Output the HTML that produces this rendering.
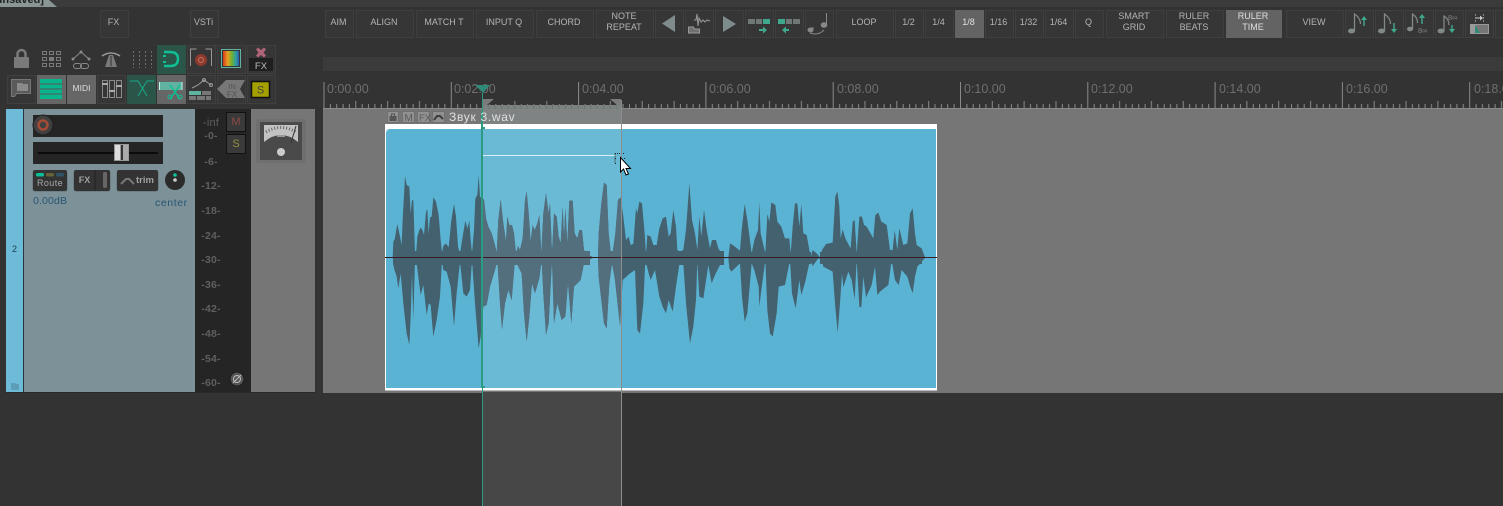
<!DOCTYPE html>
<html><head><meta charset="utf-8"><style>
html,body{margin:0;padding:0;background:#333}
#r{position:relative;width:1503px;height:506px;overflow:hidden;background:#333;font-family:"Liberation Sans","DejaVu Sans",sans-serif}
.b{position:absolute;top:10px;height:26px;border:1px solid #3f3f3f;background:#363636;color:#b4b4b4;font-size:9px;line-height:11px;display:flex;align-items:center;justify-content:center;text-align:center;box-sizing:content-box}
.b span{position:relative;top:-2px;left:-1px}
.on{background:#636363;border-color:#636363;color:#e0e0e0}
.c{position:absolute;width:27px;height:27px;border:1px solid #3f3f3f;background:#363636}
.m{position:absolute;width:40px;text-align:center;color:#5f5f5f;font-size:10.5px;line-height:12px;font-weight:bold;letter-spacing:.2px}
svg{position:absolute;left:0;top:0}
</style></head><body><div id="r">
<div style="position:absolute;left:0;top:0;width:1503px;height:7px;background:#3b3b3b"></div>
<div style="position:absolute;left:0;top:0;width:57px;height:7px;background:#8a9696;clip-path:polygon(0 0,49px 0,57px 100%,0 100%)"></div>
<div style="position:absolute;left:-8px;top:-6px;color:#222;font-size:11px;line-height:12px;font-weight:bold">[unsaved]</div>
<div style="position:absolute;left:323px;top:57px;width:1180px;height:14px;background:#3b3b3b"></div>

<div class="b" style="left:100px;width:27px"><span>FX</span></div>
<div class="b" style="left:190px;width:27px"><span>VSTi</span></div>
<div class="b" style="left:325px;width:27px"><span>AIM</span></div>
<div class="b" style="left:356px;width:56px"><span>ALIGN</span></div>
<div class="b" style="left:416px;width:56px"><span>MATCH T</span></div>
<div class="b" style="left:476px;width:56px"><span>INPUT Q</span></div>
<div class="b" style="left:536px;width:56px"><span>CHORD</span></div>
<div class="b" style="left:596px;width:56px"><span>NOTE<br>REPEAT</span></div>
<div class="b" style="left:655px;width:27px"></div>
<div class="b" style="left:685px;width:27px"></div>
<div class="b" style="left:715px;width:27px"></div>
<div class="b" style="left:745px;width:27px"></div>
<div class="b" style="left:775px;width:27px"></div>
<div class="b" style="left:805px;width:27px"></div>
<div class="b" style="left:836px;width:56px"><span>LOOP</span></div>
<div class="b" style="left:895px;width:27px"><span>1/2</span></div>
<div class="b" style="left:925px;width:27px"><span>1/4</span></div>
<div class="b on" style="left:955px;width:27px"><span>1/8</span></div>
<div class="b" style="left:985px;width:27px"><span>1/16</span></div>
<div class="b" style="left:1015px;width:27px"><span>1/32</span></div>
<div class="b" style="left:1045px;width:27px"><span>1/64</span></div>
<div class="b" style="left:1075px;width:27px"><span>Q</span></div>
<div class="b" style="left:1106px;width:56px"><span>SMART<br>GRID</span></div>
<div class="b" style="left:1166px;width:56px"><span>RULER<br>BEATS</span></div>
<div class="b on" style="left:1226px;width:54px"><span>RULER<br>TIME</span></div>
<div class="b" style="left:1286px;width:56px"><span>VIEW</span></div>
<div class="b" style="left:1345px;width:27px"></div>
<div class="b" style="left:1375px;width:27px"></div>
<div class="b" style="left:1405px;width:27px"></div>
<div class="b" style="left:1435px;width:27px"></div>
<div class="b" style="left:1465px;width:27px"></div>
<div class="b" style="left:1495px;width:27px"></div>

<div class="c" style="left:157px;top:45px;background:#2b5549;border-color:#2b5549"></div>
<div class="c" style="left:187px;top:45px"></div>
<div class="c" style="left:217px;top:45px"></div>
<div class="c" style="left:247px;top:45px"></div>
<div class="c" style="left:7px;top:75px"></div>
<div class="c" style="left:37px;top:75px;background:#666;border-color:#666"></div>
<div class="c" style="left:67px;top:75px;background:#666;border-color:#666;color:#ddd;font-size:8.5px;line-height:24px;text-align:center">MIDI</div>
<div class="c" style="left:97px;top:75px"></div>
<div class="c" style="left:127px;top:75px;background:#2b5549;border-color:#2b5549"></div>
<div class="c" style="left:157px;top:75px;background:#666;border-color:#666"></div>
<div class="c" style="left:187px;top:75px"></div>
<div class="c" style="left:217px;top:75px"></div>
<div class="c" style="left:247px;top:75px"></div>

<!-- track panel -->
<div style="position:absolute;left:6px;top:109px;width:17px;height:283px;background:#6dbbd9"></div>
<div style="position:absolute;left:23px;top:109px;width:1px;height:283px;background:#26363c"></div>
<div style="position:absolute;left:24px;top:109px;width:171px;height:283px;background:#7d9298"></div>
<div style="position:absolute;left:195px;top:109px;width:56px;height:283px;background:#252525"></div>
<div style="position:absolute;left:251px;top:109px;width:64px;height:283px;background:#767676"></div>
<div style="position:absolute;left:6px;top:392px;width:309px;height:1px;background:#2a2a2a"></div>
<div style="position:absolute;left:12px;top:244px;color:#1d3a4a;font-size:9px;line-height:11px">2</div>
<div style="position:absolute;left:33px;top:115px;width:130px;height:22px;background:#252525"></div>
<div style="position:absolute;left:33px;top:142px;width:130px;height:22px;background:#252525"></div>
<div style="position:absolute;left:33px;top:195px;color:#265574;font-size:10.5px;line-height:12px;letter-spacing:.15px">0.00dB</div>
<div style="position:absolute;left:155px;top:197px;color:#265574;font-size:10.5px;line-height:12px;letter-spacing:.6px">center</div>
<div style="position:absolute;left:33px;top:170px;width:34px;height:20px;background:#333;border-radius:2px;box-shadow:0 1px 1px #222"></div>
<div style="position:absolute;left:33px;top:178px;width:34px;text-align:center;color:#a8a8a8;font-size:9px;line-height:11px;letter-spacing:.4px">Route</div>
<div style="position:absolute;left:74px;top:170px;width:36px;height:20px;background:#333;border-radius:2px;box-shadow:0 1px 1px #222"></div>
<div style="position:absolute;left:74px;top:174px;width:21px;text-align:center;color:#a0a0a0;font-size:9px;line-height:12px;font-weight:bold">FX</div>
<div style="position:absolute;left:117px;top:170px;width:41px;height:20px;background:#333;border-radius:2px;box-shadow:0 1px 1px #222"></div>
<div style="position:absolute;left:136px;top:175px;color:#a0a0a0;font-size:9.5px;line-height:12px;font-weight:bold">trim</div>
<div class="m" style="left:191px;top:117px;font-weight:normal;font-size:11px">-inf</div>
<div class="m" style="top:130px;left:191px">-0-</div><div class="m" style="top:156px;left:191px">-6-</div><div class="m" style="top:180px;left:191px">-12-</div><div class="m" style="top:205px;left:191px">-18-</div><div class="m" style="top:230px;left:191px">-24-</div><div class="m" style="top:254px;left:191px">-30-</div><div class="m" style="top:279px;left:191px">-36-</div><div class="m" style="top:303px;left:191px">-42-</div><div class="m" style="top:328px;left:191px">-48-</div><div class="m" style="top:353px;left:191px">-54-</div><div class="m" style="top:377px;left:191px">-60-</div>
<div style="position:absolute;left:226px;top:112px;width:18px;height:18px;background:#3a3a3a;border:1px solid #111;color:#8e4a44;font-size:11px;line-height:18px;text-align:center">M</div>
<div style="position:absolute;left:226px;top:134px;width:18px;height:18px;background:#3a3a3a;border:1px solid #111;color:#94903a;font-size:11px;line-height:18px;text-align:center">S</div>

<!-- arrange -->
<div style="position:absolute;left:323px;top:109px;width:1180px;height:284px;background:#767676"></div>
<div style="position:absolute;left:482px;top:392px;width:139px;height:114px;background:#474747"></div>
<div style="position:absolute;left:482px;top:109px;width:139px;height:15px;background:#7f8383"></div>

<svg width="1503" height="506" viewBox="0 0 1503 506">
<defs><pattern id="t" patternUnits="userSpaceOnUse" x="323.5" y="80" width="127.3" height="29">
<path d="M.5 2V28M6.9 24V28M13.2 24V28M19.6 24V28M25.9 24V28M32.3 21V28M38.7 24V28M45 24V28M51.4 24V28M57.8 24V28M64.1 21V28M70.5 24V28M76.9 24V28M83.2 24V28M89.6 24V28M96 21V28M102.300 24V28M108.700 24V28M115 24V28M121.400 24V28" stroke="#8a8a8a" fill="none"/></pattern>
<pattern id="cells" patternUnits="userSpaceOnUse" x="482" y="105" width="6.37" height="4"><rect width="6.370" height="4" fill="#7b8381"/><rect width="1" height="4" fill="#6c7472"/></pattern>
<linearGradient id="g"><stop offset="0" stop-color="#d23a1f"/><stop offset=".3" stop-color="#e8a020"/><stop offset=".55" stop-color="#6fb030"/><stop offset=".8" stop-color="#2fa0a0"/><stop offset="1" stop-color="#2a5fb0"/></linearGradient></defs>
<rect x="323" y="80" width="1180" height="29" fill="url(#t)"/>
<rect x="323" y="108" width="1180" height="1" fill="#8a8a8a"/>
<g font-family="Liberation Sans,sans-serif" font-size="12.500" fill="#6f6f6f">
<text x="327" y="93">0:00.00</text><text x="454" y="93">0:02.00</text><text x="582" y="93">0:04.00</text><text x="709" y="93">0:06.00</text><text x="837" y="93">0:08.00</text><text x="964" y="93">0:10.00</text><text x="1091" y="93">0:12.00</text><text x="1219" y="93">0:14.00</text><text x="1346" y="93">0:16.00</text><text x="1474" y="93">0:18.00</text></g>
<rect x="482" y="105" width="139" height="4" fill="url(#cells)"/>
<path d="M483 99h11l-7 6h-4zM621 99h-11l7 6h4z" fill="#7b7b7b"/>
<path d="M475 85h15l-7 8z" fill="#2f8a78"/>

<!-- clip -->
<rect x="385" y="124" width="552" height="266.500" fill="#fff"/>
<rect x="386" y="129" width="550" height="259" fill="#5ab3d2"/>
<rect x="482" y="129" width="139" height="259" fill="#6bbad5"/>
<g fill="#44616f">
<polygon transform="translate(380 170) scale(.33333)" points="38,262 40,215 44,208 52,162 60,200 65,225 68,150 75,18 80,45 88,50 92,130 96,90 100,92 105,250 108,255 112,200 118,180 122,172 128,182 132,195 138,125 142,118 146,190 150,142 155,140 160,82 168,95 176,135 182,210 186,250 190,228 198,220 206,232 214,150 222,102 228,140 234,230 240,252 248,200 256,152 262,175 268,152 272,210 276,250 282,180 286,85 292,75 296,15 300,80 305,85 312,88 318,145 325,170 335,190 345,225 350,250 355,150 362,88 370,160 378,215 382,140 388,165 396,165 402,190 408,250 414,228 420,240 428,205 435,90 440,65 446,130 452,215 458,165 464,180 472,160 478,135 484,250 490,130 498,70 506,130 510,100 516,250 522,130 530,140 536,200 542,220 548,110 552,200 556,115 562,220 568,92 578,92 584,190 592,205 598,180 606,180 612,240 620,250 632,258 640,262 654,262 656,190 664,100 672,38 680,45 686,190 692,245 698,248 706,190 714,90 722,82 730,140 738,210 746,200 752,225 760,222 768,115 772,130 778,95 786,100 794,190 798,255 802,195 812,200 820,225 830,225 838,175 848,145 858,140 866,200 872,190 880,120 888,170 892,240 900,245 900,270 888,350 878,425 866,390 858,430 848,410 838,380 825,300 812,330 806,310 796,270 790,400 780,490 772,480 765,300 750,310 728,330 720,468 705,330 696,280 688,340 680,475 672,460 656,320 654,262 640,262 635,265 612,280 602,330 592,340 582,350 574,460 564,340 556,440 545,450 532,400 522,460 516,270 506,460 498,495 490,370 485,270 478,325 465,370 456,340 448,440 440,515 432,430 425,310 415,290 405,270 395,390 385,360 375,400 366,478 360,400 352,270 345,300 330,350 320,405 310,410 302,500 296,535 285,400 276,270 270,360 260,380 250,370 240,275 230,370 222,468 212,350 200,305 190,300 186,270 180,380 170,450 160,500 152,405 146,400 140,435 130,345 122,375 116,330 110,280 105,270 100,450 96,310 92,440 88,525 80,490 70,400 62,310 55,355 50,320 42,295"/>
<polygon transform="translate(660 170) scale(.33333)" points="60,245 70,240 78,180 88,40 96,150 105,190 112,240 118,140 124,200 132,120 140,180 150,235 156,210 168,210 175,235 185,250 192,262 205,264 210,220 218,225 240,242 245,180 254,102 262,150 275,250 283,210 294,180 298,98 302,190 316,250 322,132 328,155 334,97 346,105 352,155 364,170 375,205 388,205 392,250 398,170 405,100 412,100 418,170 424,102 430,190 440,195 448,240 452,262 458,240 470,250 480,262 486,240 498,222 518,218 526,80 532,64 538,110 542,205 548,178 556,205 572,235 578,155 584,150 590,250 598,140 606,140 612,165 620,170 640,205 646,135 655,128 664,155 680,165 690,240 698,240 704,180 712,240 718,175 730,225 742,220 750,130 758,115 765,190 770,225 785,235 795,262 795,264 772,290 765,320 758,370 750,348 742,320 725,300 716,345 705,330 695,270 685,345 660,365 652,375 645,290 635,345 618,382 610,320 604,412 598,410 590,270 584,388 575,330 565,305 550,352 546,310 540,400 533,488 525,400 518,305 490,290 485,270 475,265 458,288 450,270 436,335 424,375 418,330 407,415 396,370 390,270 375,345 356,350 350,430 338,500 330,490 322,420 316,270 304,360 298,410 296,350 283,300 275,280 262,430 254,455 246,380 240,280 214,305 208,295 205,264 190,265 165,315 155,340 145,285 130,385 118,380 112,275 108,390 100,470 90,520 78,400 70,280 60,280"/>
<rect x="393" y="251" width="89" height="14"/><rect x="622" y="251" width="102" height="14"/><rect x="731" y="252" width="80" height="12"/><rect x="820" y="252" width="102" height="12"/>
</g>
<polygon transform="translate(380 170) scale(.33333)" fill="#536f7e" points="306,85 312,88 318,145 325,170 335,190 345,225 350,250 355,150 362,88 370,160 378,215 382,140 388,165 396,165 402,190 408,250 414,228 420,240 428,205 435,90 440,65 446,130 452,215 458,165 464,180 472,160 478,135 484,250 490,130 498,70 506,130 510,100 516,250 522,130 530,140 536,200 542,220 548,110 552,200 556,115 562,220 568,92 578,92 584,190 592,205 598,180 606,180 612,240 620,250 632,258 640,262 654,262 656,190 664,100 672,38 680,45 686,190 692,245 698,248 706,190 714,90 722,82 724,140 724,400 720,468 705,330 696,280 688,340 680,475 672,460 656,320 654,262 640,262 635,265 612,280 602,330 592,340 582,350 574,460 564,340 556,440 545,450 532,400 522,460 516,270 506,460 498,495 490,370 485,270 478,325 465,370 456,340 448,440 440,515 432,430 425,310 415,290 405,270 395,390 385,360 375,400 366,478 360,400 352,270 345,300 330,350 320,405 310,410 306,450"/>
<rect x="483" y="251" width="107" height="14" fill="#536f7e"/><rect x="599" y="251" width="22" height="14" fill="#536f7e"/>
<rect x="385" y="257" width="552" height="1" fill="#3a1a1f"/>
<path d="M386 129h3l-3 3z" fill="#cfe7f0"/>
<path d="M482 155.500H615" stroke="#d8eef5"/>
<path d="M615 153.500h10M615 158.500h1M624 158.500h1M615 163.500h1M615 153.500v10" stroke="#222" stroke-dasharray="1 1" fill="none"/>
<rect x="621" y="100" width="1" height="406" fill="#8c8c8c"/>
<rect x="481" y="111" width="2" height="277" fill="#2a9a80"/>
<rect x="482" y="93" width="1" height="413" fill="#2a9a80"/>
<rect x="481" y="127" width="4" height="2" fill="#2a9a80"/>
<rect x="481" y="386" width="4" height="2" fill="#2a9a80"/>
<path d="M620.500 157.500V172l3-3 2.500 6 2.500-1-2.500-5.500h4.500z" fill="#fff" stroke="#000"/>
<g stroke="#6f6f6f" fill="#909090"><rect x="387.500" y="111.500" width="11" height="11"/><rect x="402.500" y="111.500" width="12" height="11"/><rect x="417.500" y="111.500" width="12" height="11"/><rect x="432.500" y="111.500" width="12" height="11"/></g>
<path d="M389.500 116h7v5h-7z" fill="#555"/><path d="M391.500 116v-2h3v2" stroke="#555" fill="none"/>
<path d="M434 120l3-4h3l3 3" stroke="#3d3d3d" stroke-width="2" fill="none"/>
<text x="404.500" y="121" font-family="Liberation Sans,sans-serif" font-size="10" fill="#5a5a5a">M</text>
<text x="419" y="121" font-family="Liberation Sans,sans-serif" font-size="9.500" fill="#5a5a5a">FX</text>
<text x="449" y="121" font-family="Liberation Sans,sans-serif,DejaVu Sans" font-size="12" letter-spacing=".7" fill="#e0e0e0">Звук 3.wav</text>

<!-- top toolbar icons -->
<path d="M675 15v17l-13-8.500z" fill="#808c8c"/><path d="M723 16v16l13-8z" fill="#808c8c"/>
<path d="M688.500 33v-6h5l1 2h5v4z" fill="#6f6f6f" stroke="#999"/><path d="M694 20h2l1-6 1 12 1-8 2 4 2-2 2 2 2-2 3 1" stroke="#999" fill="none"/>
<path d="M748 19h7v5h-7zM756 19h6v5h-6z" fill="#6f7777"/><rect x="763" y="19" width="7" height="5" fill="#3fa98d"/><path d="M759 29h4v-2.500l4 3.500-4 3.500V31h-4z" fill="#3fa98d"/>
<rect x="778" y="19" width="7" height="5" fill="#3fa98d"/><path d="M786 19h6v5h-6zM793 19h7v5h-7z" fill="#6f7777"/><path d="M789 29h-3v-2.500l-4 3.500 4 3.500V31h3z" fill="#3fa98d"/>
<g fill="#888"><ellipse cx="810.500" cy="30" rx="3" ry="2.500"/><ellipse cx="824" cy="25" rx="3.300" ry="2.800"/></g><path d="M813 30v-3M826.500 25V13M810 33q8 3 14-3" stroke="#888" fill="none"/>
<g fill="#808888"><ellipse cx="1351.500" cy="31" rx="3.500" ry="2.500"/><ellipse cx="1381.500" cy="31" rx="3.500" ry="2.500"/><ellipse cx="1410" cy="29" rx="3" ry="2.300"/><ellipse cx="1441" cy="31" rx="3.500" ry="2.500"/></g>
<path d="M1354.500 31V14q6 4 6 10M1384.500 31V14q6 4 6 10M1412.500 29V14q5 3 5 9M1444 31V16q5 3 5 9" stroke="#808888" stroke-width="1.300" fill="none"/>
<path d="M1363.300 26v-6h-2.300l3 -4 3 4h-2.300v6zM1393.300 23v6h-2.300l3 4 3-4h-2.300v-6zM1421.300 24v-6h-2.300l3-4 3 4h-2.300v6zM1451.300 25v4h-2.300l3 4 3-4h-2.300v-4z" fill="#3fa98d"/>
<text x="1418" y="33" font-family="Liberation Sans,sans-serif" font-size="7.500" fill="#808080">8∞</text>
<text x="1448" y="20" font-family="Liberation Sans,sans-serif" font-size="7.500" fill="#808080">8∞</text>
<path d="M1475.500 14v8M1483.500 14v8" stroke="#888" stroke-dasharray="2 1"/><path d="M1476 17.500h4v-2l3 2.500-3 2.500v-2h-4z" fill="#ccc"/>
<rect x="1470.500" y="24.500" width="18" height="9" fill="#777" stroke="#999"/><path d="M1471 25h5v8h-5z" fill="#9a9a9a"/><path d="M1475 25l5 8h-5z" fill="#2f8a78"/>

<!-- row 1 icons -->
<path d="M15 58h13v9H15z" fill="#7a7a7a" stroke="#7a7a7a" stroke-width="2" stroke-linejoin="round"/><path d="M17.500 57v-3a4 4 0 018 0v3" stroke="#7a7a7a" stroke-width="2.500" fill="none"/>
<g fill="none" stroke="#7a7a7a"><path d="M42.500 51.500h4v3h-4zM49.500 51.500h4v3h-4zM56.500 51.500h4v3h-4zM42.500 57.500h4v3h-4zM56.500 57.500h4v3h-4zM42.500 63.500h4v3h-4zM49.500 63.500h4v3h-4zM56.500 63.500h4v3h-4z"/></g><rect x="49" y="57" width="5" height="4" fill="#7a7a7a"/>
<path d="M73 59l8-7 8 7" fill="none" stroke="#8a8a8a"/><g fill="#8a8a8a"><circle cx="81" cy="52" r="1.500"/><circle cx="73" cy="59" r="1.500"/><circle cx="89" cy="59" r="1.500"/></g><rect x="73.500" y="63.500" width="8" height="5" rx="2.500" fill="none" stroke="#8a8a8a"/><rect x="80.500" y="63.500" width="8" height="5" rx="2.500" fill="none" stroke="#8a8a8a"/>
<path d="M102 56q9-6 18 0" stroke="#999" stroke-width="1.500" fill="none"/><path d="M105 67l4-12h4l4 12z" fill="#7a7a7a"/><path d="M111 56v10" stroke="#333"/>
<path d="M133.500 51v17M139.500 51v17M145.500 51v17M151.500 51v17" stroke="#6f6f6f" stroke-dasharray="2 2" fill="none"/>
<path d="M164 52h6q8 0 8 7t-8 7h-6" stroke="#0fbf95" stroke-width="2.500" fill="none"/><rect x="163" y="55" width="3" height="2" fill="#0fbf95"/><rect x="163" y="61" width="3" height="2" fill="#0fbf95"/>
<circle cx="201" cy="60" r="6" fill="#8c3a2f"/><circle cx="201" cy="60" r="2.500" fill="none" stroke="#c9715c"/><path d="M190.500 66V49h6M211.500 66V49h-6" stroke="#999" fill="none"/>
<rect x="221.500" y="49.500" width="19" height="18" fill="none" stroke="#5fb3a0"/>
<rect x="223" y="51" width="16" height="15" fill="url(#g)"/>
<path d="M258 47.500l3 2.500 3-2.500 2 2-2.500 3 2.500 3-2 2-3-2.500-3 2.500-2-2 2.500-3-2.500-3z" fill="#b06478"/>
<rect x="249" y="58" width="24" height="13" fill="#1f1f1f"/><text x="261" y="69" text-anchor="middle" font-family="Liberation Sans,sans-serif" font-size="9.500" fill="#bbb">FX</text>

<!-- row 2 icons -->
<path d="M11.500 79.500h19v14h-14l-2 3h-3z" fill="#5a5a5a" stroke="#777"/><path d="M17 91v-8h5l1 1h5v7z" fill="#8a8a8a"/>
<rect x="40" y="79" width="22" height="20" fill="#0ab58e"/><path d="M40 84h22M40 89h22M40 94h22" stroke="#555"/>
<g fill="none" stroke="#8a8a8a"><rect x="102.500" y="80.500" width="5" height="17"/><rect x="109.500" y="80.500" width="5" height="17"/><rect x="116.500" y="80.500" width="5" height="17"/></g><path d="M102 84h6M109 91h6M116 86h6" stroke="#aaa" stroke-width="2"/>
<path d="M130 81h8l9 15M154 81h-7l-9 15" stroke="#18a888" fill="none"/>
<rect x="160" y="82" width="22" height="8" fill="#5fb3a0"/><path d="M159.500 82v8M182 82v8" stroke="#bfe" /><path d="M170 99l10-14M180 99l-10-14" stroke="#0fbf95" stroke-width="1.500"/><circle cx="170" cy="97" r="2" fill="none" stroke="#0fbf95"/><circle cx="180" cy="97" r="2" fill="none" stroke="#0fbf95"/>
<path d="M192 88l6-3 6-5 7 5" fill="none" stroke="#999"/><circle cx="204" cy="80" r="1.500" fill="none" stroke="#999"/><circle cx="211" cy="85" r="1.500" fill="none" stroke="#999"/>
<rect x="189" y="91" width="12" height="4" fill="#5fb3a0"/><rect x="202" y="91" width="9" height="4" fill="#777"/><rect x="189" y="96" width="7" height="4" fill="#777"/><rect x="197" y="96" width="8" height="4" fill="#777"/><rect x="206" y="96" width="5" height="4" fill="#777"/>
<path d="M245 80h-19l-9 9 9 9h19l-5-9z" fill="#777"/>
<text x="232" y="89" text-anchor="middle" font-family="Liberation Sans,sans-serif" font-size="7.500" fill="#555">IN</text><text x="232" y="97" text-anchor="middle" font-family="Liberation Sans,sans-serif" font-size="8" fill="#555">FX</text>
<rect x="251.500" y="81.500" width="18" height="16" fill="#a3a000" stroke="#111" stroke-width="1.500"/><text x="260.500" y="93.500" text-anchor="middle" font-family="Liberation Sans,sans-serif" font-size="11" fill="#444">S</text>

<!-- track icons -->
<circle cx="43" cy="125" r="10.500" fill="#1e1e1e"/><circle cx="43" cy="125" r="9.500" fill="#404040"/><circle cx="43" cy="125" r="4.500" fill="none" stroke="#a24b35" stroke-width="2.500"/>
<rect x="38" y="152" width="120" height="2" fill="#0b0b0b"/>
<rect x="114" y="144" width="15" height="17" fill="#999"/><rect x="115" y="145" width="5" height="15" fill="#ddd"/><rect x="121" y="145" width="2" height="15" fill="#333"/><rect x="123" y="145" width="5" height="15" fill="#aaa"/>
<rect x="36" y="173" width="8" height="3.500" rx="1.500" fill="#08c09a"/><rect x="46" y="173" width="8" height="3.500" rx="1.500" fill="#66623a"/><rect x="56" y="173" width="8" height="3.500" rx="1.500" fill="#2f5468"/>
<path d="M95 170v20" stroke="#222"/><rect x="103" y="172" width="4" height="16" rx="1.500" fill="#666"/>
<path d="M121 184l5-5h3l5 5" fill="none" stroke="#777" stroke-width="2"/>
<circle cx="175" cy="180" r="10" fill="#2b2b2b"/><circle cx="175" cy="175" r="1.800" fill="#09c49c"/><circle cx="175" cy="180" r="1.800" fill="#ccc"/>
<circle cx="237" cy="379" r="7" fill="#555" stroke="#1a1a1a"/><circle cx="237" cy="379" r="3.500" fill="none" stroke="#bbb"/><path d="M233 383l8-8" stroke="#bbb"/>
<path d="M11 390v-7h4l1 1h3v6z" fill="#5c9eb8"/>
<!-- VU -->
<rect x="256" y="119" width="50" height="44" rx="3" fill="#6f6f6f"/>
<rect x="260" y="122" width="42" height="38" fill="#4a4a4a"/>
<path d="M264 125h34v17q-17-14-34 0z" fill="#c2c2c2"/><path d="M266 132q15-9 30 0" stroke="#666" stroke-dasharray="1 2" stroke-width="3" fill="none"/><path d="M291 143l5-17" stroke="#333"/><rect x="277" y="135" width="8" height="2" fill="#999"/>
<circle cx="281" cy="152" r="4" fill="#ccc"/>
</svg>
</div></body></html>
